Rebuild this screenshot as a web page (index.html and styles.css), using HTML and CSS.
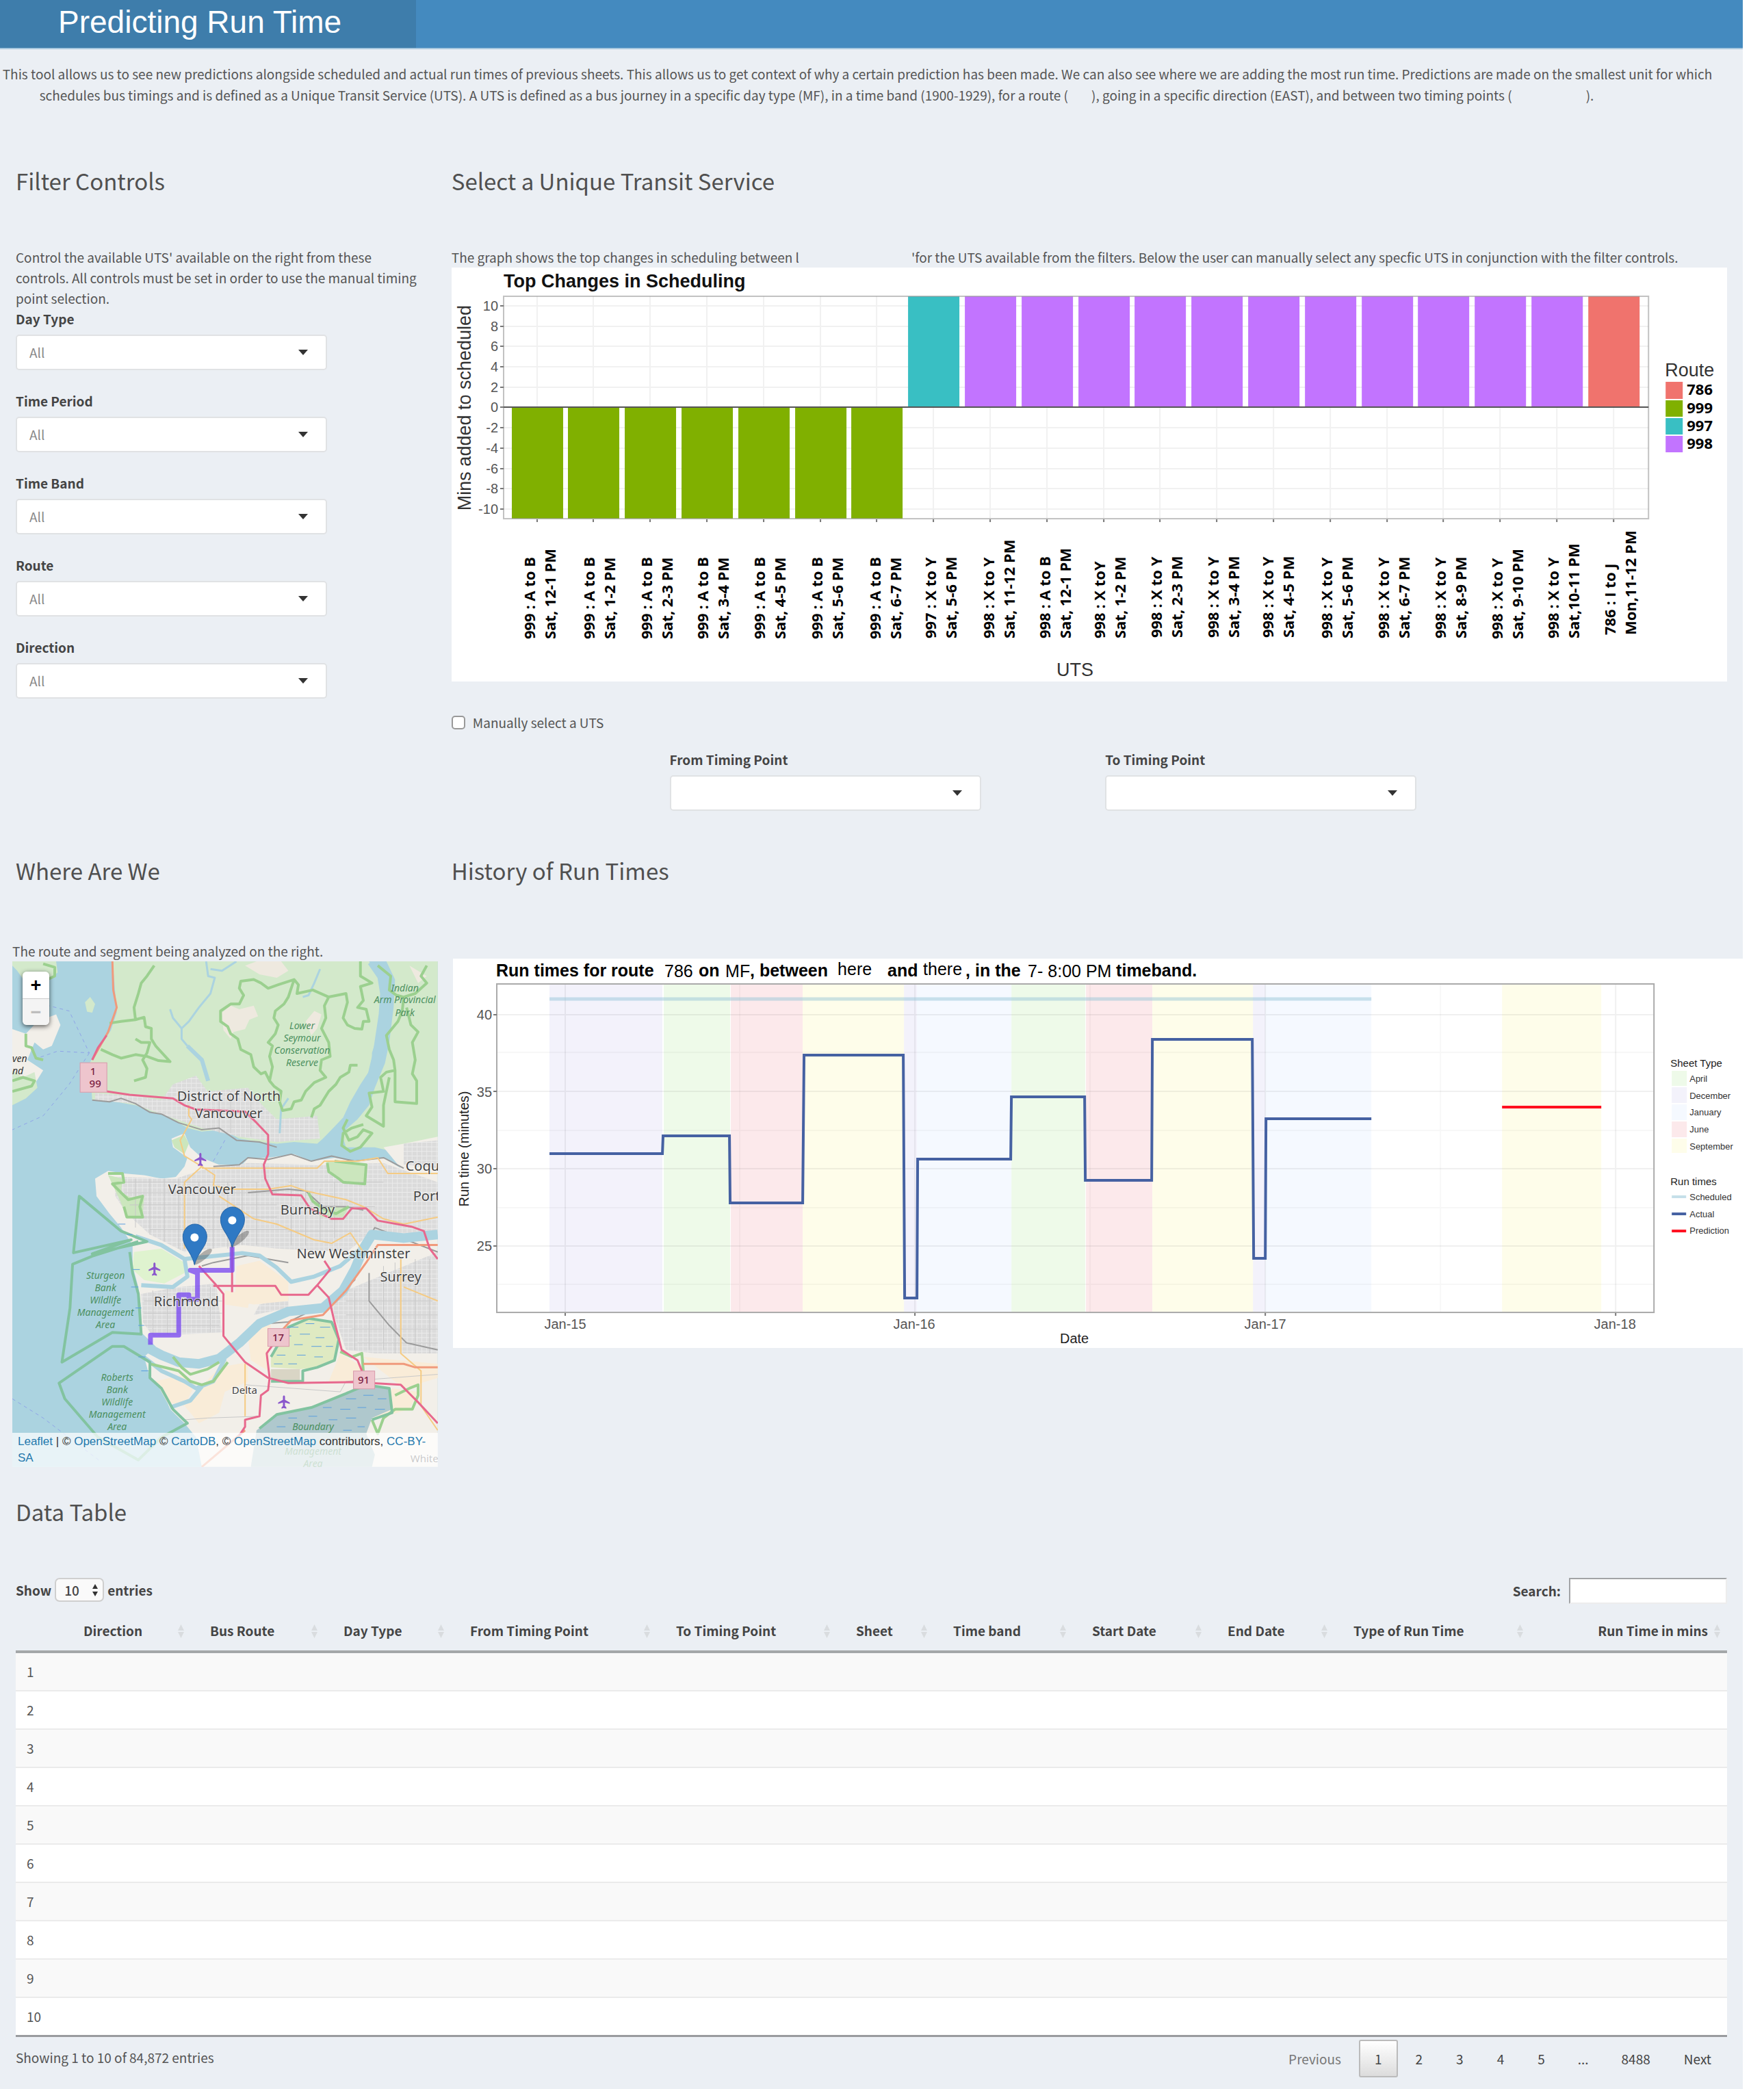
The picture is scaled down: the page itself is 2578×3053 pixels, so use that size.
FILE: index.html
```html
<!DOCTYPE html>
<html lang="en">
<head>
<meta charset="utf-8">
<title>Predicting Run Time</title>
<link rel="stylesheet" href="styles.css">
</head>
<body>
<div class="app">
  <header class="topbar"><h1 class="brand">Predicting Run Time</h1></header>
  <main>
    <p class="intro">
      <span class="line">This tool allows us to see new predictions alongside scheduled and actual run times of previous sheets. This allows us to get context of why a certain prediction has been made. We can also see where we are adding the most run time. Predictions are made on the smallest unit for which</span>
      <span class="line line-short">schedules bus timings and is defined as a Unique Transit Service (UTS). A UTS is defined as a bus journey in a specific day type (MF), in a time band (1900-1929), for a route (<span class="blank blank-s"></span>), going in a specific direction (EAST), and between two timing points (<span class="blank blank-m"></span>).</span>
    </p>

    <div class="columns first">
      <section class="col">
        <h2>Filter Controls</h2>
        <p class="help">Control the available UTS' available on the right from these controls. All controls must be set in order to use the manual timing point selection.</p>
        <div class="field"><label for="day">Day Type</label><div class="pick"><select id="day"><option>All</option></select></div></div>
        <div class="field"><label for="period">Time Period</label><div class="pick"><select id="period"><option>All</option></select></div></div>
        <div class="field"><label for="band">Time Band</label><div class="pick"><select id="band"><option>All</option></select></div></div>
        <div class="field"><label for="route">Route</label><div class="pick"><select id="route"><option>All</option></select></div></div>
        <div class="field"><label for="direction">Direction</label><div class="pick"><select id="direction"><option>All</option></select></div></div>
      </section>

      <section class="col">
        <h2>Select a Unique Transit Service</h2>
        <p class="line">The graph shows the top changes in scheduling between l<span class="blank blank-l"></span>'for the UTS available from the filters. Below the user can manually select any specfic UTS in conjunction with the filter controls.</p>
        <svg class="chart" viewBox="660 390 1864 605" role="img" aria-label="Top Changes in Scheduling">
          <rect x="660" y="390" width="1864" height="605" fill="#fff"/>
          <text class="t27 b" x="736" y="419">Top Changes in Scheduling</text>
          <path class="grid" d="M736 446H2409M736 476H2409M736 505H2409M736 535H2409M736 565H2409M736 624H2409M736 654H2409M736 684H2409M736 713H2409M736 743H2409M785 432V757M867 432V757M950 432V757M1033 432V757M1116 432V757M1199 432V757M1281 432V757M1364 432V757M1447 432V757M1530 432V757M1613 432V757M1695 432V757M1778 432V757M1861 432V757M1944 432V757M2027 432V757M2109 432V757M2192 432V757M2275 432V757M2358 432V757"/>
          <path fill="#80b000" d="M748 594h75v163h-75zM830 594h75v163h-75zM913 594h75v163h-75zM996 594h75v163h-75zM1079 594h75v163h-75zM1162 594h75v163h-75zM1244 594h75v163h-75z"/>
          <path fill="#39bfc3" d="M1327 432h75v162h-75z"/>
          <path fill="#c274ff" d="M1410 432h75v162h-75zM1493 432h75v162h-75zM1576 432h75v162h-75zM1658 432h75v162h-75zM1741 432h75v162h-75zM1824 432h75v162h-75zM1907 432h75v162h-75zM1990 432h75v162h-75zM2072 432h75v162h-75zM2155 432h75v162h-75zM2238 432h75v162h-75z"/>
          <path fill="#f0736d" d="M2321 432h75v162h-75z"/>
          <rect x="736" y="432" width="1673" height="325" fill="none" stroke="#999" stroke-opacity=".6" stroke-width="2"/>
          <path d="M736 594H2409" stroke="#555" stroke-width="2"/>
          <path class="tick" d="M731 446h5M731 476h5M731 505h5M731 535h5M731 565h5M731 594h5M731 624h5M731 654h5M731 684h5M731 713h5M731 743h5M785 758v4M867 758v4M950 758v4M1033 758v4M1116 758v4M1199 758v4M1281 758v4M1364 758v4M1447 758v4M1530 758v4M1613 758v4M1695 758v4M1778 758v4M1861 758v4M1944 758v4M2027 758v4M2109 758v4M2192 758v4M2275 758v4M2358 758v4"/>
          <g class="t20 end">
            <text x="728" y="453">10</text><text x="728" y="483">8</text><text x="728" y="512">6</text><text x="728" y="542">4</text><text x="728" y="572">2</text><text x="728" y="601">0</text><text x="728" y="631">-2</text><text x="728" y="661">-4</text><text x="728" y="691">-6</text><text x="728" y="720">-8</text><text x="728" y="750">-10</text>
          </g>
          <text class="t27 mid dim" transform="translate(688 595) rotate(-90)">Mins added to scheduled</text>
          <text class="t27 mid dim" x="1571" y="987">UTS</text>
          <g class="uts">
            <text transform="translate(782 933) rotate(-90)">999 : A to B<tspan x="0" dy="30">Sat, 12-1 PM</tspan></text>
            <text transform="translate(869 933) rotate(-90)">999 : A to B<tspan x="0" dy="30">Sat, 1-2 PM</tspan></text>
            <text transform="translate(953 933) rotate(-90)">999 : A to B<tspan x="0" dy="30">Sat, 2-3 PM</tspan></text>
            <text transform="translate(1035 933) rotate(-90)">999 : A to B<tspan x="0" dy="30">Sat, 3-4 PM</tspan></text>
            <text transform="translate(1118 933) rotate(-90)">999 : A to B<tspan x="0" dy="30">Sat, 4-5 PM</tspan></text>
            <text transform="translate(1202 933) rotate(-90)">999 : A to B<tspan x="0" dy="30">Sat, 5-6 PM</tspan></text>
            <text transform="translate(1287 933) rotate(-90)">999 : A to B<tspan x="0" dy="30">Sat, 6-7 PM</tspan></text>
            <text transform="translate(1368 932) rotate(-90)">997 : X to Y<tspan x="0" dy="30">Sat, 5-6 PM</tspan></text>
            <text transform="translate(1453 932) rotate(-90)">998 : X to Y<tspan x="0" dy="30">Sat, 11-12 PM</tspan></text>
            <text transform="translate(1535 932) rotate(-90)">998 : A to B<tspan x="0" dy="30">Sat, 12-1 PM</tspan></text>
            <text transform="translate(1615 932) rotate(-90)">998 : X toY<tspan x="0" dy="30">Sat, 1-2 PM</tspan></text>
            <text transform="translate(1698 931) rotate(-90)">998 : X to Y<tspan x="0" dy="30">Sat, 2-3 PM</tspan></text>
            <text transform="translate(1781 931) rotate(-90)">998 : X to Y<tspan x="0" dy="30">Sat, 3-4 PM</tspan></text>
            <text transform="translate(1861 931) rotate(-90)">998 : X to Y<tspan x="0" dy="30">Sat, 4-5 PM</tspan></text>
            <text transform="translate(1947 932) rotate(-90)">998 : X to Y<tspan x="0" dy="30">Sat, 5-6 PM</tspan></text>
            <text transform="translate(2030 932) rotate(-90)">998 : X to Y<tspan x="0" dy="30">Sat, 6-7 PM</tspan></text>
            <text transform="translate(2113 932) rotate(-90)">998 : X to Y<tspan x="0" dy="30">Sat, 8-9 PM</tspan></text>
            <text transform="translate(2196 933) rotate(-90)">998 : X to Y<tspan x="0" dy="30">Sat, 9-10 PM</tspan></text>
            <text transform="translate(2278 932) rotate(-90)">998 : X to Y<tspan x="0" dy="30">Sat,10-11 PM</tspan></text>
            <text transform="translate(2361 927) rotate(-90)">786 : I  to J<tspan x="0" dy="30">Mon,11-12 PM</tspan></text>
          </g>
          <text class="t27 dim" x="2433" y="549">Route</text>
          <rect x="2434" y="557" width="25" height="25" fill="#f0736d"/><rect x="2434" y="584" width="25" height="24" fill="#80b000"/><rect x="2434" y="610" width="25" height="24" fill="#39bfc3"/><rect x="2434" y="636" width="25" height="24" fill="#c274ff"/>
          <g class="uts"><text x="2465" y="576">786</text><text x="2465" y="603">999</text><text x="2465" y="629">997</text><text x="2465" y="655">998</text></g>
        </svg>
        <label class="check"><input type="checkbox">Manually select a UTS</label>
        <div class="points">
          <div class="field"><label for="from">From Timing Point</label><div class="pick"><select id="from"><option></option></select></div></div>
          <div class="field"><label for="to">To Timing Point</label><div class="pick"><select id="to"><option></option></select></div></div>
        </div>
      </section>
    </div>

    <div class="columns second">
      <section class="col">
        <h2>Where Are We</h2>
        <div class="where">
          <p class="line">The route and segment being analyzed on the right.</p>
          <div class="map">
            <svg viewBox="0 0 621 738" role="img" aria-label="Map of Vancouver">
              <defs>
                <pattern id="blocks" width="17" height="13" patternUnits="userSpaceOnUse"><rect width="17" height="13" fill="#dbdbdb"/><path d="M0 0H17M0 0V13" stroke="#ececec" stroke-width="4"/></pattern>
              </defs>
              <rect width="621" height="738" fill="#abd3e0"/>
              <g class="geo" transform="scale(.421 .51) translate(-43 -68)">
                <path fill="#d3e9cb" d="M43 68H195L200 100 165 125 130 105 90 130 60 95 43 80zM388 68L395 110 402 180 405 215 385 265 350 310 318 350 295 380 318 440 320 465 400 470 470 480 530 500 580 510 620 530 650 545 700 555 770 550 830 575 900 585 960 590 1020 585 1100 590 1120 575 1150 550 1190 515 1215 470 1250 420 1290 370 1290 330 1320 250 1330 200 1335 140 1300 100 1280 68zM1340 68L1370 120 1365 200 1350 300 1335 360 1300 430 1280 480 1240 520 1185 560 1200 600 1300 600 1400 620 1518 640V68z"/>
                <path fill="#f2efe9" d="M43 262L90 275 130 240 195 220 210 250 180 310 150 320 120 300 95 350 150 380 120 420 43 440z"/>
                <path fill="#d3e9cb" d="M43 380L80 400 120 385 130 430 90 460 43 480zM295 185l18-15 17 20-10 25-18-3z"/>
                <path fill="#eee9df" d="M770 215L800 195 830 205 880 195 895 225 865 235 850 262 810 270 800 290 775 265zM850 80L890 68H975L1000 95 960 115 900 105zM1420 80L1480 110 1450 130zM1060 240L1090 210 1115 220 1100 260 1080 280z"/>
                <path fill="url(#blocks)" d="M330 445L480 455 560 465 600 420 680 395 720 440 860 430 910 480 960 520 1100 510 1110 575 960 585 830 570 700 545 560 505 460 475 330 465z"/>
                <path fill="#f2efe9" d="M330 690L375 668 430 675 500 680 560 690 610 685 640 655 650 630 600 600 595 575 640 560 660 600 700 630 760 650 840 650 860 632 930 630 1020 620 1080 640 1160 630 1230 640 1330 630 1390 660 1330 600 1400 590 1518 570V1515H700L680 1430 640 1390 590 1350 560 1290 520 1260 500 1200 540 1170 490 1130 490 1060 480 1000 460 940 460 880 420 830 380 790 335 740z"/>
                <path fill="url(#blocks)" d="M400 685L610 690 700 665 860 645 1100 650 1330 645 1518 700V860L1300 840 1200 900 960 890 840 880 640 900 520 850 440 790 400 740zM490 1020L620 1000 750 990 770 1130 530 1140 495 1100zM1200 1010L1518 900V1190L1300 1190 1200 1180 1150 1060zM1400 590L1518 580V660L1400 650zM900 1050L1000 1030 1000 1060 880 1080z"/>
                <path fill="#cbe6bd" d="M595 580L640 565 655 590 640 620 605 600zM375 680L425 690 420 730 470 750 500 740 495 800 440 800 415 750zM1130 640L1270 650 1265 705 1180 695 1140 670zM1070 730L1120 770 1210 770 1190 800 1110 800z"/>
                <path fill="#dff3cf" d="M465 900L560 890 640 930 640 960 570 990 500 980 460 950z"/>
                <path fill="#f9ecd8" d="M820 940L900 925 1000 985V1040L880 1050 815 1040zM780 1010L870 1020 860 1060 780 1050zM540 1270L640 1250 670 1290 640 1340 580 1330zM640 1340L760 1230 860 1215 860 1270 780 1300 760 1360 690 1390zM860 1140L940 1100 930 1240 870 1210zM1180 1190L1260 1230 1240 1270 1140 1270zM1360 1290L1450 1300 1420 1350 1290 1380zM1260 1200L1518 1220V1260L1400 1290z"/>
                <path fill="#dfeac2" d="M940 1200L1000 1115 1070 1090 1150 1100 1175 1150 1160 1210 1100 1230 1040 1235 940 1230z"/>
                <path fill="#d9d5c5" d="M940 1235h100v35h-100z"/>
                <path fill="#afc8cd" d="M870 1515L890 1410 960 1365 1080 1345 1200 1305 1270 1280 1350 1290 1360 1350 1290 1375 1270 1420 1300 1480 1290 1515z"/>
                <path class="street" d="M420 700H900M430 730H960M450 765H960M480 800H960M520 835H1000M1000 700H1330M1000 770H1300M1000 840H1250M500 1040H770M500 1075H770M500 1110H760M1200 1040H1500M1200 1080H1518M1220 1120H1518M1240 1160H1518M470 690V830M520 690V850M570 690V870M620 690V890M690 700V900M740 700V890M790 700V890M840 700V880M890 700V880M1010 690V880M1060 700V880M1110 720V870M1160 700V860M530 1010V1135M580 1000V1135M730 1000V1130M1230 1010V1180M1280 960V1180M1330 940V1180M1370 930V1190M1440 920V1190M1490 920V1190M760 450V560M800 440V560M870 450V570M640 1380L720 1375 900 1370M850 1280L1180 1300 1200 1270 1518 1250"/>
                <path class="rail" d="M320 465L380 470 420 460 470 475 520 500 560 505 620 530 700 550 760 545 820 580 900 585 960 600M740 655L830 650 860 630 930 635 1010 620 1080 640 1150 625 1230 640 1330 630 1400 660M860 730L1000 720 1060 725 1120 770 1200 770 1260 780M1518 900L1300 830 1250 900 1230 980 1150 1040 1000 1100 920 1105M1280 960V1040L1350 1110 1410 1160 1518 1180M700 940L740 930 860 910 1000 930"/>
                <path class="river r7" d="M470 855L560 880 640 920 700 915 840 903 900 910 960 945 1010 985 1090 970 1180 940 1250 890M640 920L650 970 600 1000 490 995"/>
                <path class="river r14" d="M400 1140L480 1160 560 1195 620 1215 690 1220 760 1205 830 1160 900 1105 1000 1070 1120 1060 1190 1010 1230 950 1260 890 1290 850 1400 860 1518 850"/>
                <path class="river r7" d="M490 1195L560 1240 640 1270 680 1290 740 1270 780 1205M700 1285L660 1325 590 1345M650 310L700 350 722 410"/>
                <path class="river r3" d="M1110 90L1090 130 1070 165 1050 170M715 68L722 110 745 115 730 160 690 200 655 240 630 260 630 290 650 310M630 260L600 230 590 205M1000 460L975 490 970 560M820 68L770 95 730 90"/>
                <path class="river r14" d="M1290 68L1325 110 1335 160 1330 220 1310 330 1290 400"/>
                <path class="park" d="M535 80L510 110 490 130 480 160 465 200 470 235M380 245L420 240 470 235 500 228 505 255 525 260 525 290 540 310 590 355 550 352 510 340 470 335 420 345 390 335 350 320M470 290L490 300 520 300 510 330 495 350 510 375 505 400 465 410M935 410L920 385 905 390 880 370 870 335 835 320 825 290 800 275 790 255 765 240 765 210 800 190 830 190 845 165 830 145 835 125 880 120 905 130 930 145 965 135 1020 120 1035 135 1030 160 1085 150 1140 170 1125 195 1130 230 1115 260 1140 300 1145 340 1115 350 1110 380 1130 400 1090 415 1060 440 1045 465 1020 470 1010 490 980 495 970 470 975 440 950 425 935 410 945 370 935 340 945 310 930 300 955 275 965 250 950 230 955 210 985 190 1000 170 1020 120M1140 170L1200 160 1205 185 1190 230 1205 250 1230 260 1255 262 1260 240 1280 240 1270 205 1240 200 1260 180 1250 140 1290 130 1250 110 1250 68M1240 365L1215 365 1210 385 1180 400 1165 420 1140 440 1110 480 1090 490 1080 515M1310 80L1355 110 1350 150 1375 165 1400 170 1440 160 1480 130 1460 110 1480 80M1400 170L1395 210 1380 240 1340 280 1350 320 1365 350 1370 380V470L1445 475 1445 410 1430 390 1440 350 1430 300 1450 270 1425 250 1410 200M1370 380L1340 385 1320 400 1330 440 1280 445 1290 485 1270 510 1330 540 1330 480 1350 400M1260 535L1220 545 1190 560 1185 595 1215 612 1250 600 1290 560 1260 550 1240 570 1210 580 1190 545 1205 520M1135 645L1140 670 1175 690 1190 700 1265 705 1270 650 1160 640M1070 730L1085 755 1120 775 1165 790 1210 770M375 675L425 675 430 700 390 705 420 730 445 750 495 740 485 770 495 800 440 800 430 770M43 440L110 425 120 410 80 400 43 410M90 275L90 310 110 315 125 345 150 350M150 75L190 85 190 110 165 120M600 1200L630 1230 660 1250 720 1235 760 1215M520 1220L620 1240 660 1270 700 1280 740 1270 790 1215M1290 1380L1310 1420 1330 1375 1370 1350 1430 1350 1450 1310 1450 1280 1420 1290 1370 1310M1180 1185L1220 1200 1255 1190 1260 1240"/>
                <path class="reserve" d="M275 740L420 840 510 870 320 905 455 865 255 902zM480 870L320 912 252 935 243 1060 215 1215 390 1130 490 1135 480 1020 460 960 450 900M205 1275L390 1170 430 1170 520 1215 520 1260 560 1290 600 1350 650 1390 560 1430 480 1495 340 1430 225 1320z"/>
                <path class="reserve" d="M900 1405L960 1365 1080 1345 1200 1305 1270 1280 1350 1290 1360 1360 1290 1380M940 1200L1000 1115 1070 1090 1150 1100 1175 1150 1160 1210 1100 1230 1050 1240V1270H940"/>
                <path class="marsh" d="M1000 1115h35M1060 1105h30M1110 1115h35M980 1140h30M1040 1135h35M1095 1145h30M970 1165h25M1020 1165h30M1080 1170h35M1130 1170h25M960 1195h30M1030 1195h30M1090 1200h30M950 1220h30M1000 1220h30M1200 1320h35M1260 1310h35M1310 1320h30M1120 1345h30M1180 1350h35M1240 1345h30M1300 1350h35M1000 1375h30M1070 1370h30M1140 1380h30M1200 1375h35M960 1400h30M1190 1410h30M1240 1400h25M410 820h25M440 850h20M460 950h25M455 1000h25M470 1060h20M480 1110h20M480 1200h25M490 1240h25"/>
                <path class="ferry" d="M90 200L170 195 240 210 310 330 200 325 130 345M310 330L240 420 150 510 43 550M43 1320L150 1375 350 1500M740 640L780 580"/>
                <path class="gold" d="M655 480V510L665 520 625 580 640 625 700 655 640 700 640 890M700 660H1100L1125 640 1240 640 1310 630 1345 675 1518 675M700 655L745 680 740 710 800 720 930 720 1010 710 1060 725 1200 750 1260 770 1330 805 1400 820 1518 800M760 740L880 805 960 820 1090 865 1150 875 1215 845 1260 900M850 1220V1370M1390 920V1190L1460 1240V1340L1518 1410M1400 1000L1518 1040"/>
                <path class="orange" d="M390 68L393 150 405 200 375 270 320 350M1518 880L1310 880 1270 930 1200 1010 1120 1080 1010 1095 960 1140M1260 1220H1400L1440 1230H1518M700 1515L850 1410"/>
                <path class="pink" d="M320 350L340 315 370 280M370 440L450 450 600 460 640 480 680 492 850 498 890 530 930 565 930 620 915 650 920 690 945 735 1045 738 1075 775 1150 805 1190 805 1220 775 1270 775 1310 810 1430 828 1470 840 1490 890 1518 920M690 940L745 990 775 1020V1140L850 1215 930 1260 1000 1275 1225 1272 1390 1280 1450 1330 1518 1390M740 997H955L975 1022H1070L1100 995 1145 950 1125 925M1100 995L1140 1030 1160 1100 1185 1180 1240 1210 1255 1240M805 880V1015M960 1150L925 1190 935 1260 930 1295 905 1310 900 1370 850 1380 850 1400 830 1425"/>
                <path class="trip" d="M805 885V952H660L685 960V1035H655V1022H620V1138H522V1165"/>
              </g>
              <g class="plane">
                <path id="plane" d="M276 281l0 5 7 4v2l-7-2v5l2 2v2l-4-1-3 1v-2l2-2v-5l-7 2v-2l7-4v-5q1.500-3 3 0z"/>
                <use href="#plane" x="-67" y="160"/><use href="#plane" x="122" y="354"/>
              </g>
              <g class="place">
                <text x="316" y="204">District of North</text><text x="316" y="229">Vancouver</text><text x="277" y="340">Vancouver</text><text x="431" y="370">Burnaby</text><text x="498" y="433">New Westminster</text><text x="567" y="467">Surrey</text><text x="254" y="503">Richmond</text><text class="start" x="574" y="306">Coqu</text><text class="start" x="585" y="350">Port</text>
                <text class="small" x="339" y="631">Delta</text><text class="small start" x="581" y="731">White</text>
              </g>
              <g class="parkname">
                <text x="573" y="44">Indian</text><text x="573" y="61">Arm Provincial</text><text x="573" y="80">Park</text>
                <text x="423" y="99">Lower</text><text x="423" y="117">Seymour</text><text x="423" y="135">Conservation</text><text x="423" y="153">Reserve</text>
                <text x="136" y="463">Sturgeon</text><text x="136" y="481">Bank</text><text x="136" y="499">Wildlife</text><text x="136" y="517">Management</text><text x="136" y="535">Area</text>
                <text x="153" y="612">Roberts</text><text x="153" y="630">Bank</text><text x="153" y="648">Wildlife</text><text x="153" y="666">Management</text><text x="153" y="684">Area</text>
                <text x="439" y="684">Boundary</text><text x="439" y="720">Management</text><text x="439" y="738">Area</text>
              </g>
              <g class="islandname"><text x="0" y="147">ven</text><text x="0" y="165">nd</text></g>
              <g class="shield">
                <rect x="99" y="148" width="39" height="43"/><rect x="373" y="536" width="31" height="26"/><rect x="498" y="598" width="31" height="26"/>
                <text x="118" y="166">1</text><text x="121" y="184">99</text><text x="388" y="554">17</text><text x="513" y="616">91</text>
              </g>
              <ellipse cx="278" cy="431" rx="17" ry="5" fill="#333" opacity=".35" transform="rotate(-40 278 431)"/>
              <ellipse cx="332" cy="405" rx="17" ry="5" fill="#333" opacity=".35" transform="rotate(-40 332 405)"/>
              <g stroke="#2a68a8" stroke-width="1">
                <path id="pin" fill="#2f79c4" d="M266 443C262 424 249 417 249 402a17 18 0 0 1 35 0C284 417 270 424 266 443z"/><use href="#pin" x="55" y="-25"/>
              </g>
              <circle cx="266" cy="403" r="6" fill="#fff"/><circle cx="321" cy="378" r="6" fill="#fff"/>
            </svg>
            <div class="zoom"><button type="button" aria-label="Zoom in">+</button><button type="button" aria-label="Zoom out" disabled>−</button></div>
            <div class="credit"><a href="#">Leaflet</a> | © <a href="#">OpenStreetMap</a> © <a href="#">CartoDB</a>, © <a href="#">OpenStreetMap</a> contributors, <a href="#">CC-BY-SA</a></div>
          </div>
        </div>
      </section>

      <section class="col wide">
        <h2>History of Run Times</h2>
        <svg class="chart history" viewBox="660 1400 1887 569" role="img" aria-label="History of run times">
          <rect x="662" y="1400" width="1885" height="569" fill="#fff"/>
          <g class="t25"><text class="b" x="725" y="1426">Run times for route</text><text x="971" y="1427">786</text><text class="b" x="1021" y="1426">on</text><text x="1060" y="1427">MF</text><text class="b" x="1096" y="1426">, between</text><text x="1224" y="1424">here</text><text class="b" x="1297" y="1426">and</text><text x="1349" y="1424">there</text><text class="b" x="1411" y="1426">, in the</text><text x="1502" y="1427">7- 8:00 PM</text><text class="b" x="1631" y="1426">timeband.</text></g>
          <path fill="#f3f2fb" d="M803 1437h165v480h-165zM1321 1437h19v480h-19zM1831 1437h18v480h-18z"/>
          <path fill="#eefae9" d="M970 1437h97v480h-97zM1478 1437h108v480h-108z"/>
          <path fill="#fce9eb" d="M1068 1437h105v480h-105zM1587 1437h97v480h-97z"/>
          <path fill="#fefdea" d="M1173 1437h148v480h-148zM1684 1437h147v480h-147zM2195 1437h145v480h-145z"/>
          <path fill="#f5f9ff" d="M1340 1437h138v480h-138zM1849 1437h155v480h-155z"/>
          <path class="veil major" d="M726 1482H2417M726 1594H2417M726 1707H2417M726 1820H2417M826 1437V1917M1337 1437V1917M1849 1437V1917M2361 1437V1917"/>
          <path class="veil" d="M726 1537H2417M726 1651H2417M726 1764H2417M726 1876H2417M1081 1437V1917M1593 1437V1917M2105 1437V1917"/>
          <path d="M803 1459H2004" stroke="#8fc0d4" stroke-opacity=".45" stroke-width="5"/>
          <path fill="none" stroke="#4561a2" stroke-width="4" d="M803 1685H968L969 1659H1066L1067 1757H1173L1175 1541H1320L1322 1896H1340L1341 1693H1477L1478 1602H1585L1586 1724H1683L1684 1518H1830L1832 1838H1849L1850 1634H2004"/>
          <path d="M2195 1617H2340" stroke="#ff1020" stroke-width="4"/>
          <rect x="726" y="1437" width="1691" height="480" fill="none" stroke="#aaa" stroke-width="2"/>
          <path class="tick" d="M721 1482h5M721 1594h5M721 1707h5M721 1820h5M826 1918v4M1337 1918v4M1849 1918v4M2361 1918v4"/>
          <g class="t20 end"><text x="719" y="1489">40</text><text x="719" y="1602">35</text><text x="719" y="1714">30</text><text x="719" y="1827">25</text></g>
          <g class="t20 mid"><text x="826" y="1941">Jan-15</text><text x="1336" y="1941">Jan-16</text><text x="1849" y="1941">Jan-17</text><text x="2360" y="1941">Jan-18</text></g>
          <text class="t20 mid dark" x="1570" y="1962">Date</text>
          <text class="t20 mid dark" transform="translate(685 1678) rotate(-90)">Run time (minutes)</text>
          <g class="t15"><text x="2441" y="1558">Sheet Type</text><text x="2441" y="1731">Run times</text></g>
          <rect x="2443" y="1564" width="22" height="22" fill="#eefae9"/><rect x="2443" y="1588" width="22" height="23" fill="#f3f2fb"/><rect x="2443" y="1613" width="22" height="23" fill="#f5f9ff"/><rect x="2443" y="1638" width="22" height="23" fill="#fce9eb"/><rect x="2443" y="1663" width="22" height="21" fill="#fefdea"/>
          <g class="t13"><text x="2469" y="1580">April</text><text x="2469" y="1605">December</text><text x="2469" y="1629">January</text><text x="2469" y="1654">June</text><text x="2469" y="1679">September</text><text x="2469" y="1753">Scheduled</text><text x="2469" y="1778">Actual</text><text x="2469" y="1802">Prediction</text></g>
          <g stroke-width="4"><path stroke="#c5dfe9" d="M2443 1748h21"/><path stroke="#4561a2" d="M2443 1773h21"/><path stroke="#ff1020" d="M2443 1798h21"/></g>
        </svg>
      </section>
    </div>

    <section class="data">
      <h2>Data Table</h2>
      <div class="tools">
        <label class="show">Show <span class="size"><select><option>10</option></select><svg viewBox="0 0 8 18" width="8" height="18" aria-hidden="true"><path d="M0 7l4-7 4 7zM0 11h8l-4 7z"/></svg></span> entries</label>
        <label class="search">Search: <input type="search"></label>
      </div>
      <table>
        <colgroup><col class="c71"><col class="c185"><col class="c195"><col class="c185"><col class="c301"><col class="c263"><col class="c142"><col class="c203"><col class="c198"><col class="c184"><col class="c286"><col></colgroup>
        <thead><tr>
          <th></th><th>Direction</th><th>Bus Route</th><th>Day Type</th><th>From Timing Point</th><th>To Timing Point</th><th>Sheet</th><th>Time band</th><th>Start Date</th><th>End Date</th><th>Type of Run Time</th><th class="num">Run Time in mins</th>
        </tr></thead>
        <tbody>
          <tr><td>1</td><td colspan="11"></td></tr>
          <tr><td>2</td><td colspan="11"></td></tr>
          <tr><td>3</td><td colspan="11"></td></tr>
          <tr><td>4</td><td colspan="11"></td></tr>
          <tr><td>5</td><td colspan="11"></td></tr>
          <tr><td>6</td><td colspan="11"></td></tr>
          <tr><td>7</td><td colspan="11"></td></tr>
          <tr><td>8</td><td colspan="11"></td></tr>
          <tr><td>9</td><td colspan="11"></td></tr>
          <tr><td>10</td><td colspan="11"></td></tr>
        </tbody>
      </table>
      <div class="foot">
        <span>Showing 1 to 10 of 84,872 entries</span>
        <nav class="pages"><button type="button" class="off">Previous</button><button type="button" class="now">1</button><button type="button">2</button><button type="button">3</button><button type="button">4</button><button type="button">5</button><span>...</span><button type="button">8488</button><button type="button">Next</button></nav>
      </div>
    </section>
  </main>
</div>
</body>
</html>
```
FILE: styles.css
```css
* { box-sizing: border-box; }
body { margin: 0; background: #fff; }
.app {
  margin-right: 31px;
  background: #ebeff4;
  color: #555;
  font: 19px/30px "Noto Sans CJK SC", "Open Sans", sans-serif;
}
h1, h2, p { margin: 0; }
h2 { font-size: 33px; line-height: 44px; font-weight: 400; color: #505050; margin-bottom: 75px; }
select, input, button { font: inherit; color: inherit; margin: 0; }

.topbar { background: #448abf; border-bottom: 2px solid #a8c8df; }
.brand {
  width: 608px;
  padding: 0 85px 6px;
  background: #3e7dab;
  color: #fff;
  font: 400 46px/64px "Liberation Sans", Arial, sans-serif;
}

.line { white-space: nowrap; }
.intro { padding: 20px 41px 0 0; line-height: 31px; text-align: center; }
.intro .line { display: flex; justify-content: center; white-space: pre; }
.intro .line-short { padding-right: 119px; }
.blank { display: inline-block; }
.blank-s { width: 34px; }
.blank-m { width: 108px; }
.blank-l { width: 164px; }

.columns { display: grid; grid-template-columns: 1fr 3fr; }
.columns.first { padding-top: 88px; }
.columns.second { padding-top: 65px; }
.col { padding: 0 23px; min-width: 0; }
.col.wide { padding-right: 0; }

.field label { display: block; font-weight: 700; color: #444; }
.field { margin-bottom: 30px; }
.pick { display: grid; align-items: center; width: 455px; margin-top: 8px; }
.pick select {
  grid-area: 1 / 1;
  appearance: none;
  height: 52px;
  width: 100%;
  padding: 0 18px;
  border: 2px solid #e0e2e4;
  border-radius: 5px;
  background: #fff;
  color: #8a8a8a;
}
.pick::after {
  content: "";
  grid-area: 1 / 1;
  justify-self: end;
  margin-right: 28px;
  border: 7px solid transparent;
  border-top: 8px solid #333;
  border-bottom: 0;
  pointer-events: none;
}

.chart { display: block; width: 100%; height: auto; font-family: "Liberation Sans", Arial, sans-serif; }
.history { margin-top: 107px; }
.col.wide h2 { margin-bottom: 0; }
.grid { stroke: #f1f1f1; stroke-width: 2; }
.veil { stroke: #000; stroke-opacity: .03; stroke-width: 2; }
.veil.major { stroke-opacity: .06; }
.tick { stroke: #777; stroke-width: 2; }
.t27 { font-size: 27px; fill: #111; }
.t27.dim { fill: #333; }
.t25 { font-size: 25px; fill: #000; }
.t20 { font-size: 20px; fill: #555; }
.t20.dark { fill: #222; }
.t15 { font-size: 15px; fill: #222; }
.t13 { font-size: 13px; fill: #333; }
.b { font-weight: 700; }
.mid { text-anchor: middle; }
.end { text-anchor: end; }
.uts { font: 700 22px "Open Sans", "Noto Sans", sans-serif; fill: #000; white-space: pre; }

.check { display: flex; align-items: center; gap: 11px; margin: 45px 0 24px; }
.check input {
  appearance: none;
  width: 20px;
  height: 20px;
  border: 2px solid #999;
  border-radius: 5px;
  background: #fff;
}
.points { display: grid; grid-template-columns: 1fr 1fr; width: 68.3%; margin-left: 17.1%; }
.points .field { margin-bottom: 0; }

.where { margin: 0 -26px 0 -5px; padding-top: 6px; }
.map { position: relative; overflow: hidden; }
.map svg { display: block; width: 100%; height: auto; font-family: "Noto Sans", "Open Sans", sans-serif; }
.geo path { vector-effect: non-scaling-stroke; stroke-linejoin: round; }
.street, .rail, .river, .park, .reserve, .marsh, .ferry, .gold, .orange, .pink, .trip { fill: none; }
.street { stroke: #c8c8c8; stroke-width: 1; }
.rail { stroke: #9b9b9b; stroke-width: 2; }
.river { stroke: #abd3e0; }
.r3 { stroke-width: 3; }
.r7 { stroke-width: 6; }
.r14 { stroke-width: 14; }
.park { stroke: #9bd08f; stroke-width: 4; }
.reserve { stroke: #82c3a0; stroke-width: 4; }
.marsh { stroke: #5b9fdf; stroke-width: 1; }
.ferry { stroke: #8fa4e8; stroke-width: 1; stroke-dasharray: 5 5; }
.gold { stroke: #f5cb83; stroke-width: 2; }
.orange { stroke: #f09a7c; stroke-width: 3; }
.pink { stroke: #e7688d; stroke-width: 3; }
.trip { stroke: #7c4cf0; stroke-opacity: .8; stroke-width: 7; }
.plane { fill: #8a56cc; }
.place { font-size: 20px; fill: #444; text-anchor: middle; paint-order: stroke; stroke: #fff; stroke-opacity: .6; stroke-width: 2px; }
.place .small { font-size: 15px; }
.place .start { text-anchor: start; }
.parkname { font-size: 14px; font-style: italic; fill: #4c9060; text-anchor: middle; }
.islandname { font-size: 14px; font-style: italic; fill: #333; }
.shield rect { fill: #eec5cd; stroke: #d99aaa; }
.shield text { font-size: 15px; font-weight: 500; fill: #7b2042; text-anchor: middle; }
.zoom {
  position: absolute;
  left: 15px;
  top: 15px;
  display: grid;
  width: 39px;
  border-radius: 6px;
  overflow: hidden;
  box-shadow: 0 2px 7px rgba(0, 0, 0, .65);
}
.zoom button {
  height: 39px;
  padding: 0;
  border: 0;
  background: #fff;
  color: #000;
  font: 700 27px/36px "Liberation Sans", Arial, sans-serif;
}
.zoom button:disabled { background: #f4f4f4; color: #bbb; border-top: 1px solid #ccc; }
.credit {
  position: absolute;
  inset: auto 0 0 0;
  padding: 1px 8px;
  background: rgba(255, 255, 255, .72);
  color: #333;
  font: 17px/24px "Liberation Sans", Arial, sans-serif;
}
.credit a { color: #1f78ad; text-decoration: none; }

.data { padding: 43px 23px 18px; }
.tools { display: flex; justify-content: space-between; height: 38px; font-weight: 700; color: #444; }
.show, .search { display: flex; align-items: center; gap: 5px; height: 36px; }
.search { gap: 12px; height: 38px; }
.size { display: grid; align-items: center; }
.size select {
  grid-area: 1 / 1;
  appearance: none;
  width: 72px;
  height: 35px;
  padding: 0 12px;
  border: 2px solid #cfcfcf;
  border-radius: 7px;
  background: #fafafa;
  font-weight: 500;
}
.size svg { grid-area: 1 / 1; justify-self: end; margin-right: 9px; fill: #333; }
.search input { width: 231px; height: 38px; border: 2px solid #ededed; border-top-color: #a2a4a6; border-left-color: #a2a4a6; background: #fff; padding: 0 6px; }

table { width: 100%; margin-top: 24px; table-layout: fixed; border-collapse: separate; border-spacing: 0; border-bottom: 3px solid #999b9e; }
.c71 { width: 71px; } .c142 { width: 142px; } .c184 { width: 184px; } .c185 { width: 185px; }
.c195 { width: 195px; } .c198 { width: 198px; } .c203 { width: 203px; } .c263 { width: 263px; }
.c286 { width: 286px; } .c301 { width: 301px; }
th {
  padding: 0 28px 14px;
  border-bottom: 4px solid #a4a7a9;
  color: #444;
  font-weight: 700;
  text-align: left;
  white-space: nowrap;
  position: relative;
}
th.num { text-align: right; }
th:not(:empty)::after {
  content: "";
  position: absolute;
  right: 10px;
  top: 6px;
  width: 9px;
  height: 20px;
  background: #d9dcdf;
  clip-path: polygon(50% 0, 100% 45%, 0 45%, 0 55%, 100% 55%, 50% 100%, 0 55%, 0 45%);
}
td { height: 56px; padding: 0 16px; border-top: 2px solid #ebebeb; background: #fff; }
tr:nth-child(odd) td { background: #f9f9f9; }
tbody tr:first-child td { height: 54px; border-top: 0; }

.foot { display: flex; justify-content: space-between; padding-top: 4px; }
.foot > span { padding-top: 11px; }
.pages { display: flex; gap: 3px; color: #444; }
.pages button, .pages span { height: 55px; padding: 0 21px; border: 2px solid transparent; border-radius: 3px; background: none; line-height: 51px; }
.pages span { padding: 0 20px; }
.pages .off { color: #777; }
.pages .now { border-color: #bbb; background: linear-gradient(#fff, #dcdcdc); }
```
